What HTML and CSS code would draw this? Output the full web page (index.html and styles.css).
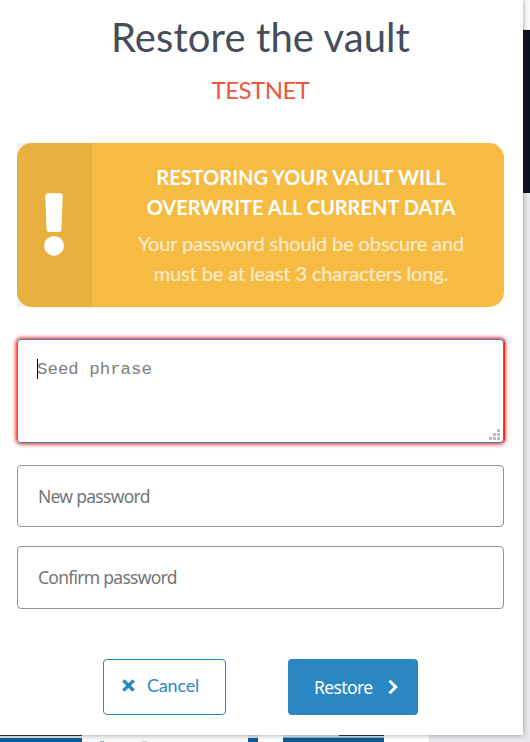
FILE: index.html
```html
<!DOCTYPE html>
<html lang="en">
<head>
<meta charset="utf-8">
<title>Restore the vault</title>
<link rel="stylesheet" href="styles.css">
</head>
<body>
<div class="screen">
  <main class="modal">
    <h1 class="title">Restore the vault</h1>
    <p class="network">TESTNET</p>
    <section class="warning-wrap">
      <div class="warning">
        <div class="warning-icon">
          <svg width="20" height="64" viewBox="0 0 20 64" fill="#fff"><path d="M4 1.200h12q2.800 0 2.700 2.800l-1.200 33q-.2 3-2.700 3H5.200q-2.500 0-2.700-3L1.300 4Q1.200 1.200 4 1.200z"/><circle cx="10" cy="53.800" r="9.900"/></svg>
        </div>
        <div class="warning-body">
          <p class="warning-title">RESTORING YOUR VAULT WILL<br>OVERWRITE ALL CURRENT DATA</p>
          <p class="warning-text">Your password should be obscure and<br>must be at least 3 characters long.</p>
        </div>
      </div>
    </section>
    <div class="seed"><span class="caret"></span><span class="seed-label">Seed phrase</span>
      <svg class="grip" width="11" height="11" viewBox="0 0 11 11" fill="#bcbcbc"><path d="M8 0h3v3H8zM4 4h3v3H4zM8 4h3v3H8zM0 8h3v3H0zM4 8h3v3H4zM8 8h3v3H8z"/></svg>
    </div>
    <div class="field new"><span>New password</span></div>
    <div class="field confirm"><span>Confirm password</span></div>
    <div class="actions">
      <div class="button cancel"><svg width="13" height="13" viewBox="0 0 13 13"><path d="M2.500 2.500l8 8M10.500 2.500l-8 8" stroke="#2b87c3" stroke-width="3.300" stroke-linecap="square" fill="none"/></svg><span>Cancel</span></div>
      <div class="button restore"><span>Restore</span><svg width="11" height="16" viewBox="0 0 11 16"><path d="M1.500 1.800l6.200 6.200-6.200 6.200" stroke="#fff" stroke-width="3" fill="none"/></svg></div>
    </div>
  </main>
  <aside class="side"><div class="side-top"></div><div class="side-dark"></div><div class="side-rest"></div></aside>
  <footer class="behind">
    <div class="strip s1"></div><div class="strip s2"><i></i><b></b></div><div class="strip s3"></div><div class="strip s4"></div><div class="strip s5"></div><div class="strip s6"></div><div class="strip s7"></div>
  </footer>
</div>
</body>
</html>
```
FILE: styles.css
```css
* { box-sizing: border-box; }
body { margin: 0; background: #fff; font-family: Lato, sans-serif; overflow: hidden; }
h1, p { margin: 0; font-weight: 400; }
svg { display: block; flex: none; }
.screen { display: grid; grid-template: 735px 7px / 523px 7px; width: 530px; height: 742px; }
.modal { position: relative; z-index: 1; display: flex; flex-direction: column; background: #fff; padding: 13px 19px 0 17px; box-shadow: 0 0 5px rgba(0,0,0,.4); }
.title { height: 48px; line-height: 48px; font-size: 40px; letter-spacing: .1px; color: #454d59; text-align: center; white-space: nowrap; }
.network { margin-top: 14px; height: 30px; line-height: 30px; font-size: 24px; letter-spacing: -.5px; color: #ec573d; text-align: center; }
.warning-wrap { margin-top: 38px; height: 164px; background: linear-gradient(90deg, #f1f1f1 16px, #fff 16px); }
.warning { display: flex; height: 164px; border-radius: 15px; overflow: hidden; background: #f6bb43; }
.warning-icon { width: 75px; background: #e9b03f; display: flex; justify-content: center; padding: 49px 1px 0 0; }
.warning-body { flex: 1; padding: 19px 0 0 6px; text-align: center; white-space: nowrap; font-size: 20px; line-height: 30px; }
.warning-title { font-weight: 700; color: #fff; }
.warning-text { margin-top: 6px; letter-spacing: -.12px; color: #fcebcb; -webkit-text-stroke: .2px #fcebcb; }
.seed { position: relative; display: flex; margin-top: 32px; height: 104px; padding: 19px 0 0 19px; border: 1px solid #2b87c3; border-radius: 4px; box-shadow: 1px 0 0 #ff2020, 0 0 4px 1px #f00; }
.caret { width: 1px; height: 20px; background: #000; }
.seed-label { margin: 1px 0 0 -1px; font: 17.330px/20px "Liberation Mono", monospace; letter-spacing: .05px; color: #7d7d7d; }
.grip { position: absolute; right: 3px; bottom: 2px; }
.field { display: flex; align-items: center; height: 62px; padding-left: 20px; border: 1px solid #8996a0; border-radius: 4px; font: 17.500px "Noto Sans", sans-serif; letter-spacing: -.73px; color: #757575; white-space: nowrap; }
.new { margin-top: 22px; }
.confirm { margin-top: 19px; height: 63px; padding-bottom: 2px; }
.actions { display: flex; gap: 62px; margin: 50px 0 0 86px; }
.button { display: flex; align-items: center; height: 56px; border-radius: 4px; }
.cancel { width: 123px; border: 1px solid #2b87c3; color: #2b87c3; font-size: 18px; letter-spacing: -.2px; padding: 0 0 3px 18px; gap: 12px; }
.cancel span { padding-bottom: 2px; }
.restore { width: 130px; background: #2b87c3; color: #fff; font: 17.500px "Noto Sans", sans-serif; letter-spacing: -.6px; padding-left: 26px; gap: 15px; }
.side { display: flex; flex-direction: column; }
.side-top { height: 30px; background: #fafafa; border-bottom: 1px solid #e3e5ea; }
.side-dark { position: relative; z-index: 2; height: 163px; background: #0c1023; }
.side-rest { flex: 1; background: #e7e9ec; }
.behind { grid-column: 1 / 3; display: flex; }
.strip { height: 7px; }
.s1 { width: 82px; background: linear-gradient(#333 1px, #e4e8ec 1px 3px, #0b5a98 3px); }
.s2 { width: 166px; background: #fafafa; display: flex; align-items: flex-end; padding-left: 18px; gap: 38px; }
.s2 i { width: 4px; height: 1px; background: #76afd5; }
.s2 b { width: 5px; height: 1px; background: #c8c8c8; }
.s3 { width: 10px; background: linear-gradient(#e0e5ea 3px, #0b5a98 3px); }
.s4 { width: 25px; background: #fff; }
.s5 { width: 101px; background: linear-gradient(90deg, transparent 56px, #333 56px) 0 0 / 100% 1px no-repeat, linear-gradient(#e0e5ea 2px, #87b6d3 2px 3px, #0b5a98 3px); }
.s6 { width: 45px; background: #fff; }
.s7 { width: 101px; background: #e7e9ec; }
```
